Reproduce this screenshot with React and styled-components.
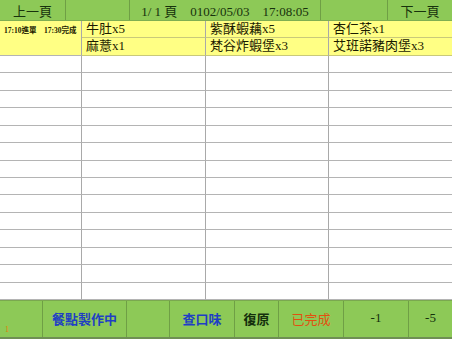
import * as React from "react";
import styled, { createGlobalStyle } from "styled-components";

const GlobalStyle = createGlobalStyle`
  html, body {
    margin: 0;
    padding: 0;
    background: #ffffff;
  }
  body {
    font-family: "Liberation Serif", "Noto Sans CJK TC", serif;
  }
`;

const orders = [
  ["牛肚x5", "紫酥蝦藕x5", "杏仁茶x1"],
  ["麻薏x1", "梵谷炸蝦堡x3", "艾班諾豬肉堡x3"]
];

const footerButtons = [
  { w: 43, label: "", tone: "mark" },
  { w: 84, label: "餐點製作中", tone: "blue", bold: true },
  { w: 43, label: "", tone: "dark" },
  { w: 65, label: "查口味", tone: "blue", bold: true },
  { w: 44, label: "復原", tone: "dark", bold: true },
  { w: 65, label: "已完成", tone: "orange" },
  { w: 65, label: "-1", tone: "dark" },
  { w: 43, label: "-5", tone: "dark" }
];

const toneColors = {
  blue: "#1f3fc4",
  orange: "#e2500f",
  dark: "#14300c",
  mark: "#e07a00"
};

class App extends React.Component {
  render() {
    const emptyRows = [];
    for (let r = 0; r < 14; r++) {
      for (let c = 0; c < 4; c++) {
        emptyRows.push(<Cell key={r + "-" + c} $last={c === 3} />);
      }
    }

    return (
      <Screen>
        <GlobalStyle />
        <Header>
          <HeadCell $w={66}>上一頁</HeadCell>
          <HeadCell $w={64} />
          <HeadCell $w={191}>
            1/ 1 頁&nbsp;&nbsp;&nbsp;&nbsp;0102/05/03&nbsp;&nbsp;&nbsp;&nbsp;17:08:05
          </HeadCell>
          <HeadCell $w={67} />
          <HeadCell $w={64} $last>下一頁</HeadCell>
        </Header>
        <Board>
          <TimeCell>17:10進單&nbsp;&nbsp;&nbsp;&nbsp;17:30完成</TimeCell>
          {orders[0].map((item, i) => (
            <Cell key={"a" + i} $yellow $last={i === 2}>{item}</Cell>
          ))}
          {orders[1].map((item, i) => (
            <Cell key={"b" + i} $yellow $last={i === 2}>{item}</Cell>
          ))}
          {emptyRows}
        </Board>
        <Footer>
          {footerButtons.map((b, i) => (
            <FootCell
              key={i}
              $w={b.w}
              $color={toneColors[b.tone]}
              $bold={b.bold}
              $mark={b.tone === "mark"}
              $last={i === footerButtons.length - 1}
            >
              {b.tone === "mark" ? <Mark>1</Mark> : b.label}
            </FootCell>
          ))}
        </Footer>
      </Screen>
    );
  }
}

const Screen = styled.div`
  width: 452px;
  height: 339px;
  display: flex;
  flex-direction: column;
  overflow: hidden;
`;

const Header = styled.div`
  height: 21px;
  display: flex;
  background-color: #8dc957;
  border-bottom: 1px solid #7fae52;
  box-sizing: border-box;
`;

const HeadCell = styled.div`
  width: ${(p) => p.$w}px;
  flex: ${(p) => (p.$last ? "1" : "none")};
  display: flex;
  align-items: center;
  justify-content: center;
  font-size: 13px;
  color: #17320c;
  white-space: nowrap;
  box-sizing: border-box;
  border-right: ${(p) => (p.$last ? "none" : "1px solid #6f9f45")};
`;

const Board = styled.div`
  height: 279px;
  display: grid;
  grid-template-columns: 82px 124px 123px 123px;
  grid-template-rows: repeat(16, 1fr);
`;

const Cell = styled.div`
  box-sizing: border-box;
  background-color: ${(p) => (p.$yellow ? "#ffff84" : "#ffffff")};
  border-right: ${(p) => (p.$last ? "none" : "1px solid #a9a9a9")};
  border-bottom: 1px solid ${(p) => (p.$yellow ? "#c9c97a" : "#b4b4b4")};
  padding-left: 4px;
  font-size: 13px;
  line-height: 16px;
  color: #1a1a00;
  white-space: nowrap;
  overflow: hidden;
`;

const TimeCell = styled.div`
  grid-row: span 2;
  box-sizing: border-box;
  background-color: #ffff84;
  border-right: 1px solid #a9a9a9;
  border-bottom: 1px solid #b4b4b4;
  padding: 5px 0 0 4px;
  font-size: 7.5px;
  font-weight: 700;
  line-height: 10px;
  color: #222200;
  white-space: nowrap;
`;

const Footer = styled.div`
  flex: 1;
  display: flex;
  background-color: #8dc957;
  border-top: 1px solid #7aa84f;
  border-bottom: 2px solid #6f8f55;
  box-sizing: border-box;
`;

const FootCell = styled.div`
  width: ${(p) => p.$w}px;
  flex: ${(p) => (p.$last ? "1" : "none")};
  display: flex;
  align-items: ${(p) => (p.$mark ? "flex-end" : "center")};
  justify-content: ${(p) => (p.$mark ? "flex-start" : "center")};
  padding: ${(p) => (p.$mark ? "0 0 3px 5px" : "0 0 2px 0")};
  font-size: 13px;
  font-weight: ${(p) => (p.$bold ? 700 : 400)};
  color: ${(p) => p.$color};
  white-space: nowrap;
  box-sizing: border-box;
  border-right: ${(p) => (p.$last ? "none" : "1px solid #6f9f45")};
`;

const Mark = styled.span`
  font-size: 8px;
  line-height: 8px;
  color: #e07a00;
`;

export default App;
